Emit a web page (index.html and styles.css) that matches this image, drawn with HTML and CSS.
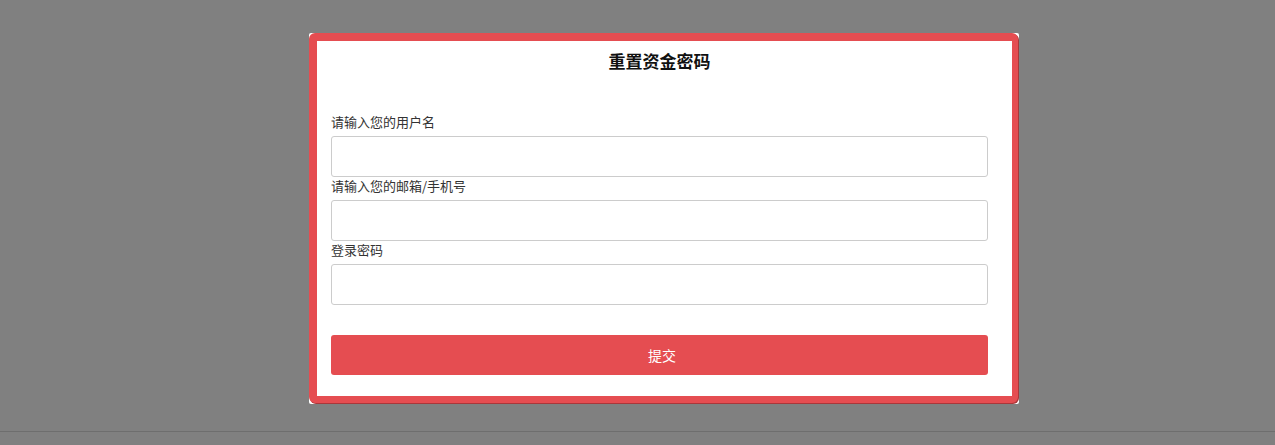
FILE: index.html
```html
<!DOCTYPE html>
<html lang="zh-CN">
<head>
    <meta charset="UTF-8">
    <meta name="viewport" content="width=device-width, initial-scale=1.0">
    <title>重置资金密码</title>
    <link rel="stylesheet" href="styles.css">
</head>
<body>
    <div class="backdrop">
        <div class="modal">
            <div class="modal-frame">
                <form class="reset-form">
                    <h2>重置资金密码</h2>

                    <label for="username">请输入您的用户名</label>
                    <input type="text" id="username">

                    <label for="contact">请输入您的邮箱/手机号</label>
                    <input type="text" id="contact">

                    <label for="password">登录密码</label>
                    <input type="password" id="password">

                    <button type="button" class="submit-btn">提交</button>
                </form>
            </div>
        </div>
    </div>
</body>
</html>
```

FILE: styles.css
```css
* {
    margin: 0;
    padding: 0;
    box-sizing: border-box;
}

body {
    font-family: 'Noto Sans CJK SC', 'Liberation Sans', sans-serif;
    background: #808080;
    height: 445px;
    overflow: hidden;
}

.backdrop {
    height: 432px;
    padding-top: 33px;
    padding-left: 309px;
    border-bottom: 1px solid #6e6e6e;
}

.modal {
    width: 710px;
    height: 371px;
    background: white;
    border-radius: 2px;
}

.modal-frame {
    width: 709px;
    height: 370px;
    border-style: solid;
    border-color: #e54d51;
    border-width: 8px 6px 7px 8px;
    border-radius: 6px;
    box-shadow: 1px 1px 0 #a9373a;
    background: white;
}

.reset-form {
    padding: 9px 24px 0 14px;
    display: flex;
    flex-direction: column;
}

.reset-form h2 {
    font-size: 17px;
    font-weight: bold;
    line-height: 22px;
    text-align: center;
    color: #111;
    margin-bottom: 41px;
}

.reset-form label {
    font-size: 13px;
    line-height: 18px;
    color: #333;
    margin-bottom: 5px;
}

.reset-form input {
    height: 41px;
    border: 1px solid #ccc;
    border-radius: 3px;
    background: white;
    font-family: inherit;
    font-size: 13px;
    padding: 0 10px;
}

.submit-btn {
    margin-top: 30px;
    height: 40px;
    padding-left: 5px;
    border: none;
    border-radius: 3px;
    background: #e54d51;
    color: white;
    font-family: inherit;
    font-size: 14px;
    cursor: pointer;
}
```
